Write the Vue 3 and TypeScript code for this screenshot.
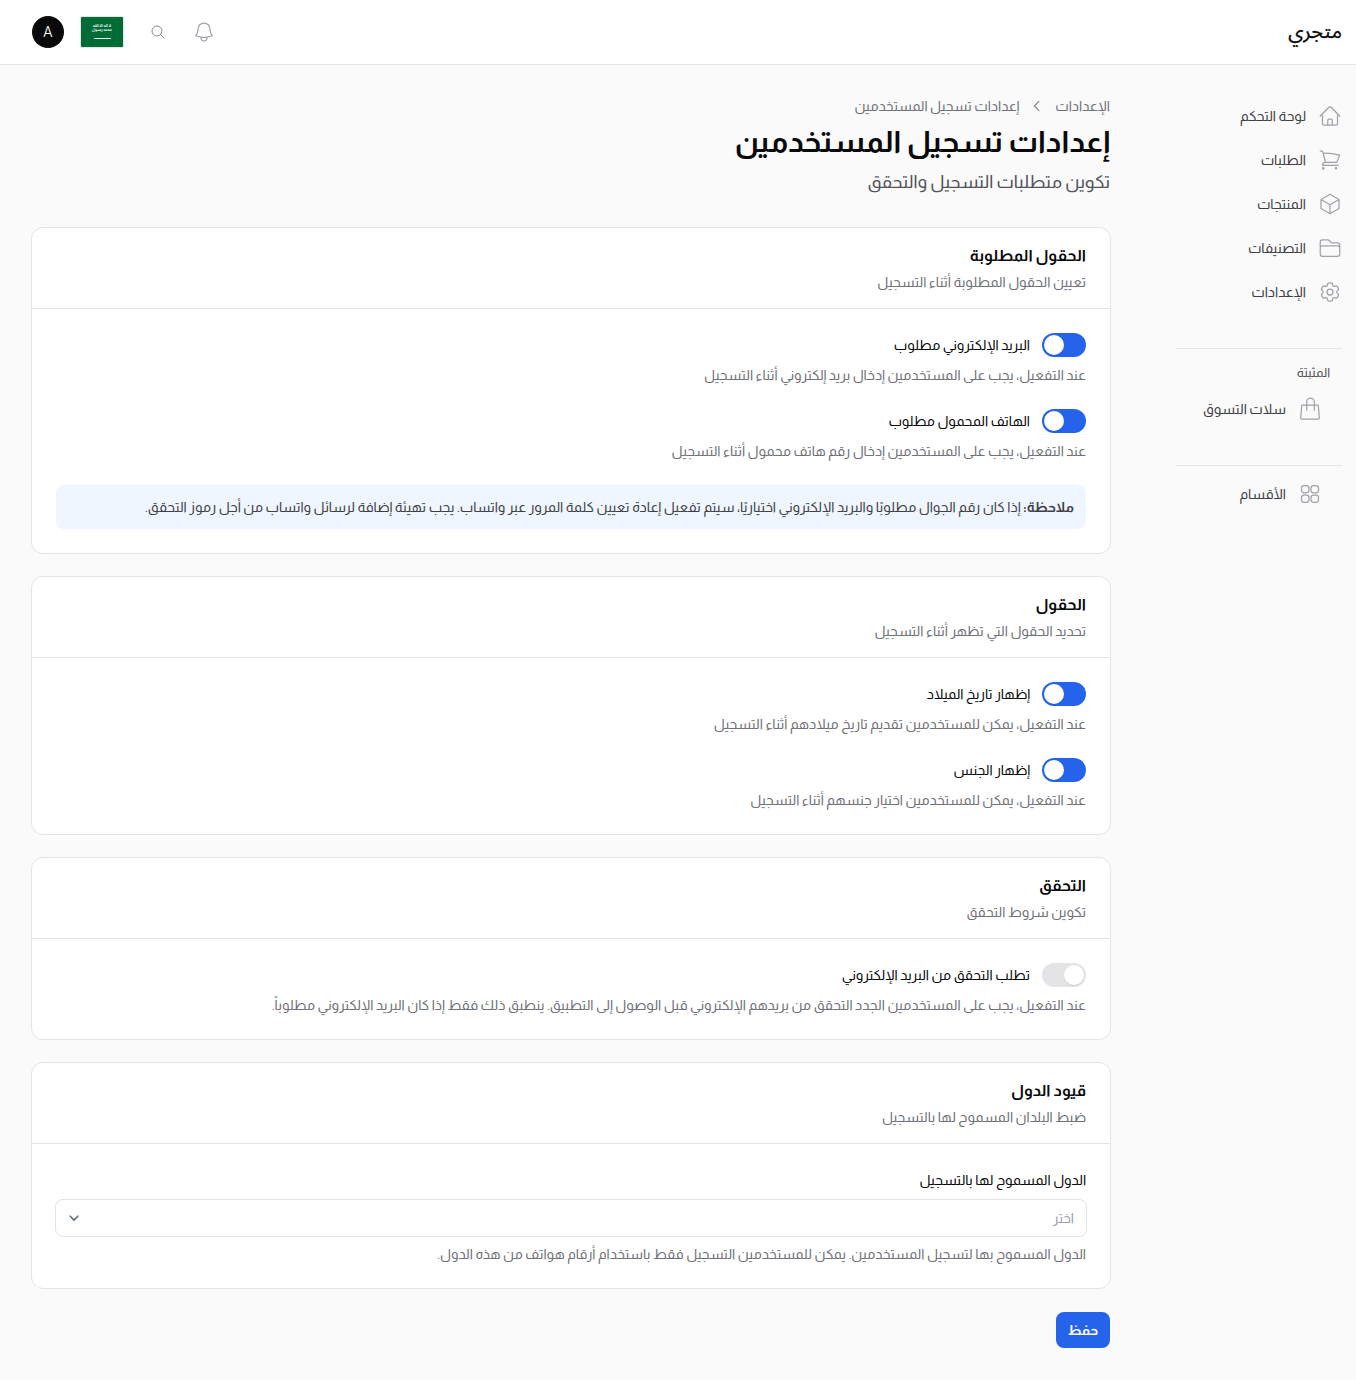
<script setup lang="ts">
interface Setting { label: string; desc: string; on: boolean }
interface Section { title: string; sub: string; settings: Setting[]; note?: boolean }

const nav = [
  { label: 'لوحة التحكم', d: ['M2.25 12l8.954-8.955c.44-.439 1.152-.439 1.591 0L21.75 12M4.5 9.75v10.125c0 .621.504 1.125 1.125 1.125H9.75v-4.875c0-.621.504-1.125 1.125-1.125h2.25c.621 0 1.125.504 1.125 1.125V21h4.125c.621 0 1.125-.504 1.125-1.125V9.75M8.25 21h8.25'] },
  { label: 'الطلبات', d: ['M2.25 3h1.386c.51 0 .955.343 1.087.835l.383 1.437M7.5 14.25a3 3 0 00-3 3h15.75m-12.75-3h11.218c1.121-2.3 2.1-4.684 2.924-7.138a60.114 60.114 0 00-16.536-1.84M7.5 14.25L5.106 5.272M6 20.25a.75.75 0 11-1.5 0 .75.75 0 011.5 0zm12.75 0a.75.75 0 11-1.5 0 .75.75 0 011.5 0z'] },
  { label: 'المنتجات', d: ['M21 7.5l-9-5.25L3 7.5m18 0l-9 5.25m9-5.25v9l-9 5.25M3 7.5l9 5.25M3 7.5v9l9 5.25m0-9v9'] },
  { label: 'التصنيفات', d: ['M2.25 12.75V12A2.25 2.25 0 014.5 9.75h15A2.25 2.25 0 0121.75 12v.75m-8.69-6.44l-2.12-2.12a1.5 1.5 0 00-1.061-.44H4.5A2.25 2.25 0 002.25 6v12a2.25 2.25 0 002.25 2.25h15A2.25 2.25 0 0021.75 18V9a2.25 2.25 0 00-2.25-2.25h-5.379a1.5 1.5 0 01-1.06-.44z'] },
  { label: 'الإعدادات', d: ['M9.594 3.94c.09-.542.56-.94 1.11-.94h2.593c.55 0 1.02.398 1.11.94l.213 1.281c.063.374.313.686.645.87.074.04.147.083.22.127.324.196.72.257 1.075.124l1.217-.456a1.125 1.125 0 011.37.49l1.296 2.247a1.125 1.125 0 01-.26 1.431l-1.003.827c-.293.24-.438.613-.431.992a6.759 6.759 0 010 .255c-.007.378.138.75.43.99l1.005.828c.424.35.534.954.26 1.43l-1.298 2.247a1.125 1.125 0 01-1.369.491l-1.217-.456c-.355-.133-.75-.072-1.076.124a6.57 6.57 0 01-.22.128c-.331.183-.581.495-.644.869l-.213 1.28c-.09.543-.56.941-1.11.941h-2.594c-.55 0-1.02-.398-1.11-.94l-.213-1.281c-.062-.374-.312-.686-.644-.87a6.52 6.52 0 01-.22-.127c-.325-.196-.72-.257-1.076-.124l-1.217.456a1.125 1.125 0 01-1.369-.49l-1.297-2.247a1.125 1.125 0 01.26-1.431l1.004-.827c.292-.24.437-.613.43-.992a6.932 6.932 0 010-.255c.007-.378-.138-.75-.43-.99l-1.004-.828a1.125 1.125 0 01-.26-1.43l1.297-2.247a1.125 1.125 0 011.37-.491l1.216.456c.356.133.751.072 1.076-.124.072-.044.146-.087.22-.128.332-.183.582-.495.644-.869l.214-1.281z', 'M15 12a3 3 0 11-6 0 3 3 0 016 0z'] },
]

const sections: Section[] = [
  {
    title: 'الحقول المطلوبة',
    sub: 'تعيين الحقول المطلوبة أثناء التسجيل',
    note: true,
    settings: [
      { label: 'البريد الإلكتروني مطلوب', desc: 'عند التفعيل، يجب على المستخدمين إدخال بريد إلكتروني أثناء التسجيل', on: true },
      { label: 'الهاتف المحمول مطلوب', desc: 'عند التفعيل، يجب على المستخدمين إدخال رقم هاتف محمول أثناء التسجيل', on: true },
    ],
  },
  {
    title: 'الحقول',
    sub: 'تحديد الحقول التي تظهر أثناء التسجيل',
    settings: [
      { label: 'إظهار تاريخ الميلاد', desc: 'عند التفعيل، يمكن للمستخدمين تقديم تاريخ ميلادهم أثناء التسجيل', on: true },
      { label: 'إظهار الجنس', desc: 'عند التفعيل، يمكن للمستخدمين اختيار جنسهم أثناء التسجيل', on: true },
    ],
  },
  {
    title: 'التحقق',
    sub: 'تكوين شروط التحقق',
    settings: [
      { label: 'تطلب التحقق من البريد الإلكتروني', desc: 'عند التفعيل، يجب على المستخدمين الجدد التحقق من بريدهم الإلكتروني قبل الوصول إلى التطبيق. ينطبق ذلك فقط إذا كان البريد الإلكتروني مطلوباً.', on: false },
    ],
  },
]
</script>

<template>
  <div class="page" dir="rtl">
    <header class="topbar">
      <div class="logo">متجري</div>
      <div class="actions">
        <svg class="bell" viewBox="0 0 24 24"><path d="M14.857 17.082a23.848 23.848 0 005.454-1.31A8.967 8.967 0 0118 9.75v-.7V9A6 6 0 006 9v.75a8.967 8.967 0 01-2.312 6.022c1.733.64 3.56 1.085 5.455 1.31m5.714 0a24.255 24.255 0 01-5.714 0m5.714 0a3 3 0 11-5.714 0" /></svg>
        <svg class="search" viewBox="0 0 24 24"><path d="M21 21l-5.197-5.197m0 0A7.5 7.5 0 105.196 5.196a7.5 7.5 0 0010.607 10.607z" /></svg>
        <div class="flag">
          <span class="shahada">لا إله إلا الله محمد رسول</span>
          <i class="sword"></i>
        </div>
        <div class="avatar">A</div>
      </div>
    </header>

    <div class="layout">
      <aside class="sidebar">
        <nav class="nav">
          <a v-for="item in nav" :key="item.label" class="nav-item">
            <svg class="nav-icon" viewBox="0 0 24 24"><path v-for="p in item.d" :key="p" :d="p" /></svg>
            <span>{{ item.label }}</span>
          </a>
        </nav>
        <div class="side-block pinned">
          <div class="side-heading">المثبتة</div>
          <a class="sub-item">
            <svg class="sub-icon" viewBox="0 0 24 24"><path d="M4.5 8h15c.4 0 .7.3.8.7l1 12c0 .7-.3 1.3-1 1.3H3.7c-.7 0-1-.6-1-1.3l1-12c.1-.4.4-.7.8-.7z" /><path d="M8.7 13V4.8a3.8 3.8 0 017.6 0V13" /></svg>
            <span>سلات التسوق</span>
          </a>
        </div>
        <div class="side-block">
          <a class="sub-item">
            <svg class="sub-icon" viewBox="0 0 24 24"><rect x="3.5" y="3.5" width="7.5" height="7.3" rx="2.5" /><rect x="13" y="3.5" width="7.5" height="7.3" rx="2.5" /><rect x="3.5" y="13" width="7.5" height="7.3" rx="2.5" /><rect x="13" y="13" width="7.5" height="7.3" rx="2.5" /></svg>
            <span>الأقسام</span>
          </a>
        </div>
      </aside>

      <main class="main">
        <div class="crumbs">
          <span>الإعدادات</span>
          <svg class="crumb-sep" viewBox="0 0 24 24"><path d="M15 5l-7 7 7 7" /></svg>
          <span>إعدادات تسجيل المستخدمين</span>
        </div>
        <h1 class="title">إعدادات تسجيل المستخدمين</h1>
        <p class="subtitle">تكوين متطلبات التسجيل والتحقق</p>

        <div class="cards">
          <section v-for="s in sections" :key="s.title" class="card">
            <div class="card-head">
              <h2>{{ s.title }}</h2>
              <p>{{ s.sub }}</p>
            </div>
            <div class="card-body">
              <div v-for="st in s.settings" :key="st.label" class="setting">
                <div class="setting-row">
                  <span class="toggle" :class="{ on: st.on }"><i></i></span>
                  <span class="setting-label">{{ st.label }}</span>
                </div>
                <p class="help">{{ st.desc }}</p>
              </div>
              <div v-if="s.note" class="note"><b>ملاحظة:</b> إذا كان رقم الجوال مطلوبًا والبريد الإلكتروني اختياريًا، سيتم تفعيل إعادة تعيين كلمة المرور عبر واتساب. يجب تهيئة إضافة لرسائل واتساب من أجل رموز التحقق.</div>
            </div>
          </section>

          <section class="card">
            <div class="card-head">
              <h2>قيود الدول</h2>
              <p>ضبط البلدان المسموح لها بالتسجيل</p>
            </div>
            <div class="card-body country">
              <label class="field-label">الدول المسموح لها بالتسجيل</label>
              <div class="select">
                <span>اختر</span>
                <svg viewBox="0 0 24 24"><path d="M5.5 9l6.5 6.5L18.5 9" /></svg>
              </div>
              <p class="help country-help">الدول المسموح بها لتسجيل المستخدمين. يمكن للمستخدمين التسجيل فقط باستخدام أرقام هواتف من هذه الدول.</p>
            </div>
          </section>
        </div>

        <div class="footer"><button class="save" type="button">حفظ</button></div>
      </main>
    </div>
  </div>
</template>

<style>
html, body { margin: 0; background: #fafafa; }
</style>

<style scoped>
.page {
  min-height: 1380px;
  background: #fafafa;
  color: #09090b;
  font-family: "Almarai", "Noto Sans Arabic", "Noto Sans", sans-serif;
  font-size: 14px;
  line-height: 20px;
}
svg { fill: none; stroke: currentColor; stroke-width: 1.25; stroke-linecap: round; stroke-linejoin: round; display: block; flex: none; }
h1, h2, p { margin: 0; }

.topbar {
  height: 64px;
  display: flex;
  align-items: center;
  justify-content: space-between;
  padding: 0 14px 0 32px;
  background: #fff;
  border-bottom: 1px solid #e4e4e7;
}
.logo { font-family: "Noto Sans Arabic", "Noto Sans", sans-serif; font-size: 20px; line-height: 28px; -webkit-text-stroke: 0.3px #09090b; }
.actions { display: flex; align-items: center; }
.bell { width: 24px; height: 24px; color: #a1a1aa; margin-left: 26px; }
.search { width: 16px; height: 16px; color: #71717a; margin-left: 26px; }
.flag {
  width: 44px; height: 32px;
  box-sizing: border-box;
  background: #006c35;
  border: 1px solid #e4e4e7;
  border-radius: 2px;
  display: flex; flex-direction: column; align-items: center;
  margin-left: 16px;
  overflow: hidden;
}
.shahada { width: 26px; height: 8px; font-size: 3.8px; line-height: 4px; color: #fff; margin-top: 7px; text-align: center; font-weight: 700; overflow: hidden; }
.sword { display: block; width: 17px; height: 1px; background: #e8f2ec; margin-top: 6px; flex: none; }
.avatar {
  width: 32px; height: 32px; border-radius: 50%;
  background: #09090b; color: #fff;
  display: flex; align-items: center; justify-content: center;
  font-size: 14px; font-weight: 300;
}

.layout { display: flex; }
.sidebar { padding: 29px 14px 0 34px; width: 166px; flex: none; }
.nav { display: flex; flex-direction: column; padding-bottom: 34px; }
.nav-item { height: 44px; display: flex; align-items: center; gap: 12px; color: #3f3f46; }
.nav-icon { width: 24px; height: 24px; color: #a1a1aa; }
.side-block { border-top: 1px solid #e4e4e7; padding: 12px 0 0; }
.pinned { height: 104px; }
.side-heading { font-size: 12.8px; line-height: 24px; color: #52525b; padding-right: 12px; }
.sub-item { height: 48px; display: flex; align-items: center; gap: 14px; padding-right: 22px; color: #3f3f46; }
.sub-icon { width: 24px; height: 24px; margin: 0 -2px; color: #a1a1aa; }
.side-block:not(.pinned) { padding-top: 4px; }

.main { flex: 1; min-width: 0; padding: 31px 32px 32px; }
.crumbs { display: flex; align-items: center; gap: 8px; color: #71717a; }
.crumb-sep { width: 16px; height: 16px; color: #8a8a93; margin: 0 2px; stroke-width: 1.8; }
.title { font-size: 30px; font-weight: 700; line-height: 36px; margin-top: 8px; }
.subtitle { font-size: 18px; line-height: 28px; color: #52525b; margin-top: 8px; }

.cards { display: flex; flex-direction: column; gap: 22px; margin: 31px -1px 0; }
.card { background: #fff; border: 1px solid #e4e4e7; border-radius: 12px; }
.card-head { padding: 16px 24px; border-bottom: 1px solid #e4e4e7; }
.card-head h2 { font-size: 16px; font-weight: 700; line-height: 24px; }
.card-head p { color: #71717a; margin-top: 4px; }
.card-body { padding: 24px; display: flex; flex-direction: column; gap: 24px; }
.setting-row { display: flex; align-items: center; gap: 12px; height: 24px; }
.setting-label { color: #09090b; }
.help { color: #71717a; margin-top: 8px; }
.toggle {
  width: 44px; height: 24px; border-radius: 12px;
  background: #e4e4e7; display: flex; align-items: center; flex: none;
  padding: 2px; box-sizing: border-box;
}
.toggle i { display: block; width: 20px; height: 20px; border-radius: 50%; background: #fff; box-shadow: 0 1px 2px rgba(0, 0, 0, 0.08); }
.toggle.on { background: #2563eb; flex-direction: row-reverse; justify-content: flex-start; }
.note {
  background: #eff6ff; border-radius: 8px; padding: 12px; color: #3f3f46;
}
.note b { font-weight: 700; }

.country { gap: 0; padding: 26px 24px 24px; }
.field-label { line-height: 20px; margin-bottom: 9px; color: #09090b; }
.select {
  height: 38px; box-sizing: border-box;
  border: 1px solid #e4e4e7; border-radius: 8px;
  display: flex; align-items: center; justify-content: space-between;
  margin: 0 -1px;
  padding: 0 12px 0 11px; color: #a1a1aa; background: #fff;
}
.select svg { width: 14px; height: 14px; color: #6b7280; stroke-width: 3; }
.country-help { margin-top: 7px; }

.footer { margin-top: 23px; display: flex; justify-content: flex-start; }
.save {
  width: 54px; height: 36px; border: 0; border-radius: 8px;
  background: #2563eb; color: #fff; font: inherit; font-weight: 700;
}
</style>
